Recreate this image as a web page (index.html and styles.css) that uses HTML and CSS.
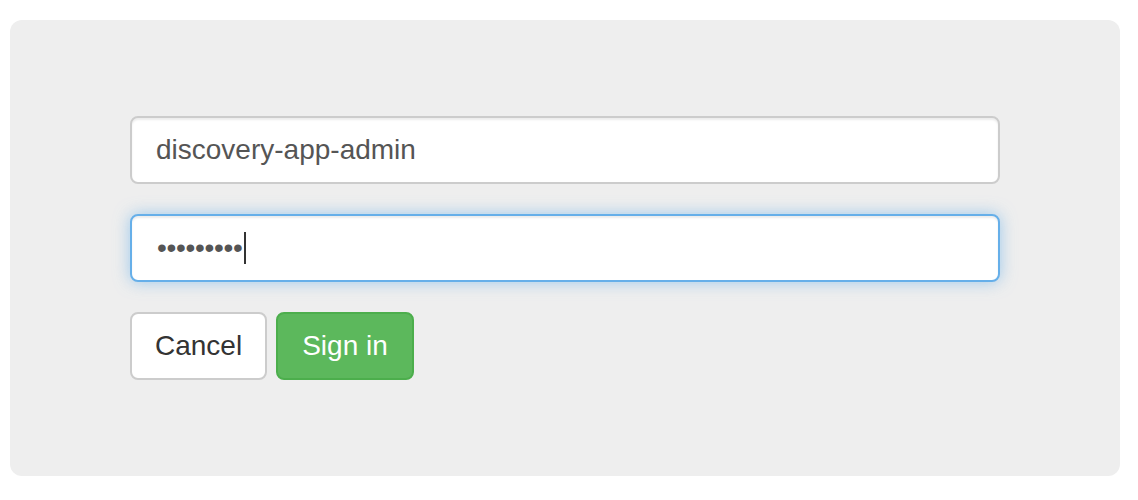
FILE: index.html
```html
<!DOCTYPE html>
<html lang="en">
<head>
<meta charset="utf-8">
<title>Sign in</title>
<link rel="stylesheet" href="styles.css">
</head>
<body>
<div class="jumbotron">
  <form class="login-form">
    <div class="form-group">
      <input class="form-control" type="text" value="discovery-app-admin" aria-label="Username">
    </div>
    <div class="form-group">
      <div class="form-control focused" role="textbox" aria-label="Password"><span class="dots">•••••••••</span><span class="caret"></span></div>
    </div>
    <div class="actions">
      <button type="button" class="btn btn-default">Cancel</button>
      <button type="button" class="btn btn-success">Sign in</button>
    </div>
  </form>
</div>
</body>
</html>
```

FILE: styles.css
```css
html, body {
  margin: 0;
  padding: 0;
  background: #fff;
}
body {
  padding: 20px 18px 24px 10px;
  font-family: "Liberation Sans", Arial, sans-serif;
  font-size: 28px;
  color: #333;
}
.jumbotron {
  background: #eeeeee;
  border-radius: 12px;
  padding: 96px 120px;
}
.login-form {
  display: flex;
  flex-direction: column;
}
.form-group {
  margin-bottom: 30px;
}
.form-control {
  box-sizing: border-box;
  display: flex;
  align-items: center;
  width: 100%;
  height: 68px;
  padding: 12px 24px;
  font-family: "Liberation Sans", Arial, sans-serif;
  font-size: 28px;
  color: #555;
  background: #fff;
  border: 2px solid #ccc;
  border-radius: 8px;
  box-shadow: inset 0 2px 2px rgba(0,0,0,.075);
  outline: none;
  margin: 0;
}
.form-control.focused {
  border-color: #66afe9;
  box-shadow: inset 0 2px 2px rgba(0,0,0,.075), 0 0 16px rgba(102,175,233,.6);
}
.dots {
  color: #555;
  letter-spacing: -0.3px;
  margin-left: 1px;
}
.caret {
  display: inline-block;
  width: 2px;
  height: 32px;
  background: #333;
  margin-left: 1px;
}
.actions {
  display: flex;
  gap: 9px;
}
.btn {
  box-sizing: border-box;
  height: 68px;
  padding: 12px 23px;
  font-family: "Liberation Sans", Arial, sans-serif;
  font-size: 28px;
  line-height: 40px;
  border: 2px solid;
  border-radius: 8px;
  cursor: pointer;
}
.btn-default {
  color: #333;
  background: #fff;
  border-color: #ccc;
}
.btn-success {
  color: #fff;
  background: #5cb85c;
  border-color: #4cae4c;
  padding: 12px 24px;
}
```
